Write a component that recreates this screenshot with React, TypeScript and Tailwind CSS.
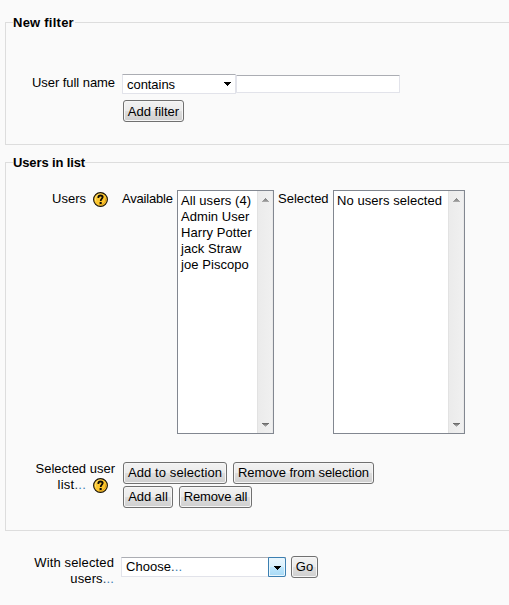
import React from "react";

function Help() {
  return (
    <svg width="15" height="15" viewBox="0 0 15 15" className="block shrink-0">
      <circle cx="7.5" cy="7.5" r="6.9" fill="#fcc62d" stroke="#15100a" strokeWidth="1.1" />
      <path d="M3 9.5A5 5 0 0 1 8.5 2.2" fill="none" stroke="#ffe27a" strokeWidth="1" />
      <path d="M12.6 6.5A5.3 5.3 0 0 1 6 12.6" fill="none" stroke="#d99a20" strokeWidth="1" />
      <path d="M5.4 5.9V5.1C5.4 3.9 6.2 3.5 7.5 3.5S9.7 4 9.7 5.1C9.7 6.6 7.7 6.6 7.7 8.9" fill="none" stroke="#0d0a05" strokeWidth="1.8" />
      <path d="M6.6 10h2.1v2H6.6z" fill="#0d0a05" />
    </svg>
  );
}

function Button({ className, children }: { className: string; children: React.ReactNode }) {
  return (
    <button
      className={
        "flex h-[22px] shrink-0 justify-center whitespace-nowrap rounded-[3px] border border-[#707070] bg-[linear-gradient(#f2f2f2_0%,#ebebeb_48%,#dddddd_52%,#cfcfcf_100%)] leading-[20px] shadow-[inset_0_0_0_1px_#f6f6f6] " +
        className
      }
    >
      {children}
    </button>
  );
}

function Caret() {
  return (
    <svg width="7" height="4" viewBox="0 0 7 4" shapeRendering="crispEdges" className="block">
      <path d="M0 0h7v1H0zM1 1h5v1H1zM2 2h3v1H2zM3 3h1v1H3z" fill="#000" />
    </svg>
  );
}

function ScrollArrow({ down = false }: { down?: boolean }) {
  return (
    <svg width="7" height="4" viewBox="0 0 7 4" shapeRendering="crispEdges" className="block">
      {down ? (
        <>
          <path d="M0 0h7v1H0z" fill="#6c6c6c" />
          <path d="M1 1h5v1H1z" fill="#858585" />
          <path d="M2 2h3v1H2z" fill="#a0a0a0" />
          <path d="M3 3h1v1H3z" fill="#b8b8b8" />
        </>
      ) : (
        <>
          <path d="M3 0h1v1H3z" fill="#8c8c8c" />
          <path d="M2 1h3v1H2z" fill="#8c8c8c" />
          <path d="M1 2h5v1H1z" fill="#969696" />
          <path d="M0 3h7v1H0z" fill="#a8a8a8" />
        </>
      )}
    </svg>
  );
}

function ListBox({ items, className }: { items: string[]; className: string }) {
  return (
    <div className={"flex h-[244px] shrink-0 justify-between border border-[#828790] bg-white " + className}>
      <ul className="pl-[3px] pt-[2px] tracking-[0.06px]">
        {items.map((item) => (
          <li key={item} className="h-4 whitespace-nowrap leading-4">
            {item}
          </li>
        ))}
      </ul>
      <div className="flex w-[16px] shrink-0 flex-col items-center justify-between border-x border-l-[#e2e2e2] border-r-[#e9e9e9] bg-[linear-gradient(90deg,#ebebeb,#f0f0f0)] pb-[6px] pt-[7px]">
        <ScrollArrow />
        <ScrollArrow down />
      </div>
    </div>
  );
}

function Dots() {
  return (
    <>
      <span className="text-[#33475c]">.</span>
      <span className="text-[#3d7fb5]">..</span>
    </>
  );
}

export default function App() {
  return (
    <main className="h-[605px] w-[509px] overflow-hidden bg-[#fafafa] pl-[5px] pt-[14px] font-['Liberation_Sans',Arial,sans-serif] text-[13px] leading-4 text-black">
      <fieldset className="h-[131px] w-[520px] border border-[#dddddd] pl-[7px]">
        <legend className="h-4 pr-px font-bold leading-[18px] tracking-[0.24px]">New filter</legend>
        <div className="mt-[44px] flex">
          <div className="mr-[7px] w-[102px] whitespace-nowrap pt-px text-right tracking-[-0.06px]">User full name</div>
          <div>
            <div className="flex items-center">
              <div className="flex h-5 w-[114px] items-center justify-between rounded-[1px] border border-[#e2e3ea] border-t-[#abadb3] bg-white pl-1 pr-1">
                <span className="pt-[2px] tracking-[-0.05px]">contains</span>
                <Caret />
              </div>
              <input className="block h-[18px] w-[164px] rounded-[1px] border border-[#e2e3ea] border-t-[#abadb3] bg-white" />
            </div>
            <Button className="ml-px mt-[6px] w-[61px] pt-px">Add filter</Button>
          </div>
        </div>
      </fieldset>

      <fieldset className="mt-[9px] h-[377px] w-[520px] border border-[#dddddd] pl-[7px]">
        <legend className="h-4 font-bold leading-[18px] tracking-[-0.13px]">Users in list</legend>
        <div className="mt-5 flex">
          <div className="mr-[14px] flex w-[95px] justify-end gap-[7px]">
            <span className="pt-px">Users</span>
            <div className="pt-[2px]">
              <Help />
            </div>
          </div>
          <span className="w-[55px] shrink-0 pt-px tracking-[-0.2px]">Available</span>
          <ListBox
            className="w-[97px]"
            items={["All users (4)", "Admin User", "Harry Potter", "jack Straw", "joe Piscopo"]}
          />
          <span className="ml-1 w-[55px] shrink-0 pt-px">Selected</span>
          <ListBox className="w-[132px]" items={["No users selected"]} />
        </div>
        <div className="mt-7 flex">
          <div className="mr-[8px] w-[102px] text-right">
            <div className="-mt-px">Selected user</div>
            <div className="flex justify-end gap-[7px] pr-[7px]">
              <span className="tracking-[0.25px]">
                list<Dots />
              </span>
              <div className="pt-px">
                <Help />
              </div>
            </div>
          </div>
          <div className="flex flex-col gap-[2px]">
            <div className="flex gap-[6px]">
              <Button className="w-[104px] tracking-[0.1px]">Add to selection</Button>
              <Button className="w-[141px] tracking-[-0.1px]">Remove from selection</Button>
            </div>
            <div className="flex gap-[6px]">
              <Button className="w-[50px]">Add all</Button>
              <Button className="w-[73px] tracking-[-0.15px]">Remove all</Button>
            </div>
          </div>
        </div>
      </fieldset>

      <div className="mt-[24px] flex">
        <div className="mr-[7px] w-[109px] text-right tracking-[0.13px]">
          With selected
          <br />
          users<Dots />
        </div>
        <div className="mt-[2px] flex h-5 w-[165px] justify-between border-b border-l border-t border-[#e2e3ea] border-t-[#abadb3] bg-white">
          <span className="pl-1 leading-[18px] tracking-[0.05px]">
            Choose<Dots />
          </span>
          <div className="-my-px flex h-5 w-[18px] items-center justify-center rounded-r-[2px] border border-[#3c7fb1] bg-[linear-gradient(#eaf6fd_0%,#d9f0fc_48%,#bee6fd_52%,#a7d9f5_100%)] pt-px shadow-[inset_0_0_0_1px_#e8f6fd]">
            <Caret />
          </div>
        </div>
        <Button className="ml-[5px] mt-px w-[27px]">Go</Button>
      </div>
    </main>
  );
}
